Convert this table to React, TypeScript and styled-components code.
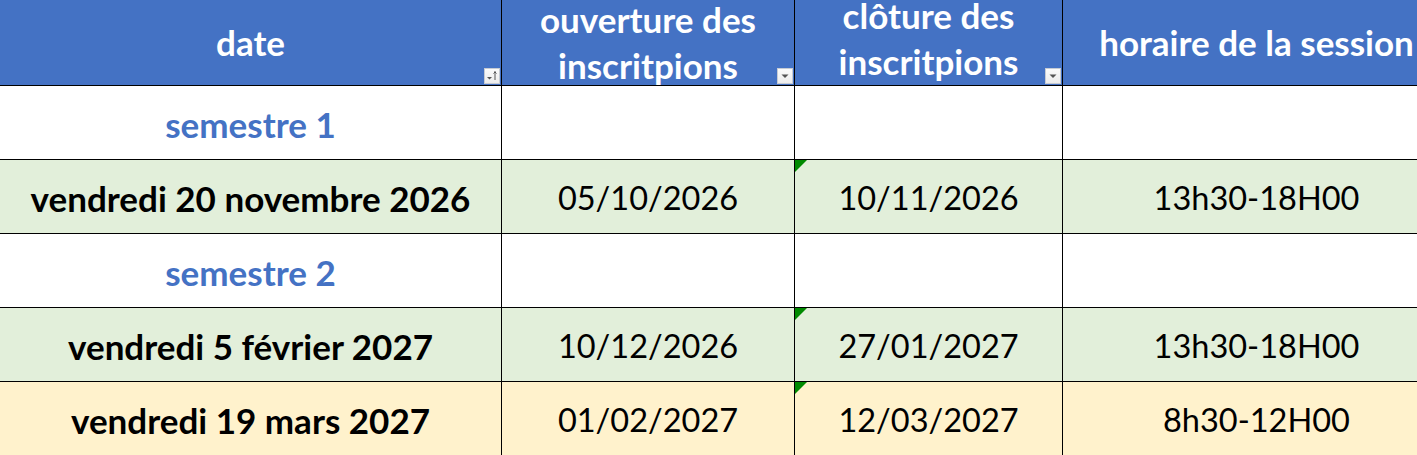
import React from "react";
import styled, { createGlobalStyle } from "styled-components";

const GlobalStyle = createGlobalStyle`
    html, body {
        margin: 0;
        padding: 0;
        background: #ffffff;
        overflow: hidden;
    }
`;

const Sheet = styled.div`
    display: grid;
    grid-template-columns: 502px 293px 268px 388px;
    grid-template-rows: 86px repeat(5, 74px);
    width: 1451px;
    font-family: Lato, "Liberation Sans", sans-serif;
`;

const HeaderCell = styled.div<{ $shift?: number }>`
    position: relative;
    display: flex;
    align-items: center;
    justify-content: center;
    overflow: hidden;
    background: #4472c4;
    color: #ffffff;
    font-weight: 700;
    font-size: 35px;
    line-height: 46px;
    text-align: center;
    border-right: 1px solid #000000;
    border-bottom: 1px solid #000000;
    box-sizing: border-box;
    white-space: nowrap;

    & > span {
        transform: translateY(${(p) => p.$shift ?? -1}px);
    }
`;

const FilterButton = styled.div`
    position: absolute;
    right: 1px;
    bottom: 1px;
    width: 16px;
    height: 16px;
    box-sizing: border-box;
    border: 1px solid #c6cbd3;
    background: linear-gradient(#fbfbfb, #ececec);
    display: flex;
    align-items: center;
    justify-content: center;
`;

const Cell = styled.div<{ $bg: string; $bold?: boolean; $color?: string }>`
    position: relative;
    display: flex;
    align-items: center;
    justify-content: center;
    background: ${(p) => p.$bg};
    color: ${(p) => p.$color ?? "#000000"};
    font-weight: ${(p) => (p.$bold ? 700 : 400)};
    font-size: ${(p) => (p.$bold ? 35 : 32.5)}px;
    border-right: 1px solid #000000;
    border-bottom: 1px solid #000000;
    box-sizing: border-box;
    white-space: nowrap;
    overflow: hidden;
`;

const Label = styled.span<{ $dy?: number }>`
    transform: translateY(${(p) => p.$dy ?? 1}px);
`;

const ErrorMark = styled.div`
    position: absolute;
    left: 0;
    top: 0;
    width: 0;
    height: 0;
    border-top: 12px solid #008a00;
    border-right: 12px solid transparent;
`;

function DropIcon({ sorted }: { sorted?: boolean }): JSX.Element {
    return (
        <svg width="14" height="14" viewBox="0 0 14 14">
            {sorted ? (
                <>
                    <path d="M2 8 L7 8 L4.5 10.5 Z" fill="#555" />
                    <path d="M10 11 L10 3 M8.5 4.5 L10 3 L11.5 4.5 M9 3 L11 3" stroke="#555" strokeWidth="1" fill="none" />
                </>
            ) : (
                <path d="M3.5 5.5 L10.5 5.5 L7 9 Z" fill="#555" />
            )}
        </svg>
    );
}

const WHITE = "#ffffff";
const GREEN = "#e2efda";
const YELLOW = "#fff2cc";
const BLUE = "#4472c4";

type Row = {
    bg: string;
    date: string;
    semester?: boolean;
    open?: string;
    close?: string;
    hours?: string;
};

const rows: Row[] = [
    { bg: WHITE, date: "semestre 1", semester: true },
    { bg: GREEN, date: "vendredi 20 novembre 2026", open: "05/10/2026", close: "10/11/2026", hours: "13h30-18H00" },
    { bg: WHITE, date: "semestre 2", semester: true },
    { bg: GREEN, date: "vendredi 5 février 2027", open: "10/12/2026", close: "27/01/2027", hours: "13h30-18H00" },
    { bg: YELLOW, date: "vendredi 19 mars 2027", open: "01/02/2027", close: "12/03/2027", hours: "8h30-12H00" },
];

export default function App(): JSX.Element {
    return (
        <>
            <GlobalStyle />
            <Sheet>
                <HeaderCell>
                    <span>date</span>
                    <FilterButton><DropIcon sorted /></FilterButton>
                </HeaderCell>
                <HeaderCell>
                    <span>ouverture des<br />inscritpions</span>
                    <FilterButton><DropIcon /></FilterButton>
                </HeaderCell>
                <HeaderCell $shift={-5}>
                    <span>clôture des<br />inscritpions</span>
                    <FilterButton><DropIcon /></FilterButton>
                </HeaderCell>
                <HeaderCell>
                    <span>horaire de la session</span>
                </HeaderCell>

                {rows.map((r, i) => (
                    <React.Fragment key={i}>
                        <Cell $bg={r.bg} $bold $color={r.semester ? BLUE : undefined}>
                            <Label $dy={r.semester ? 1 : 1}>{r.date}</Label>
                        </Cell>
                        <Cell $bg={r.bg}><Label>{r.open}</Label></Cell>
                        <Cell $bg={r.bg}>
                            {r.close && <ErrorMark />}
                            <Label>{r.close}</Label>
                        </Cell>
                        <Cell $bg={r.bg}><Label>{r.hours}</Label></Cell>
                    </React.Fragment>
                ))}
            </Sheet>
        </>
    );
}
